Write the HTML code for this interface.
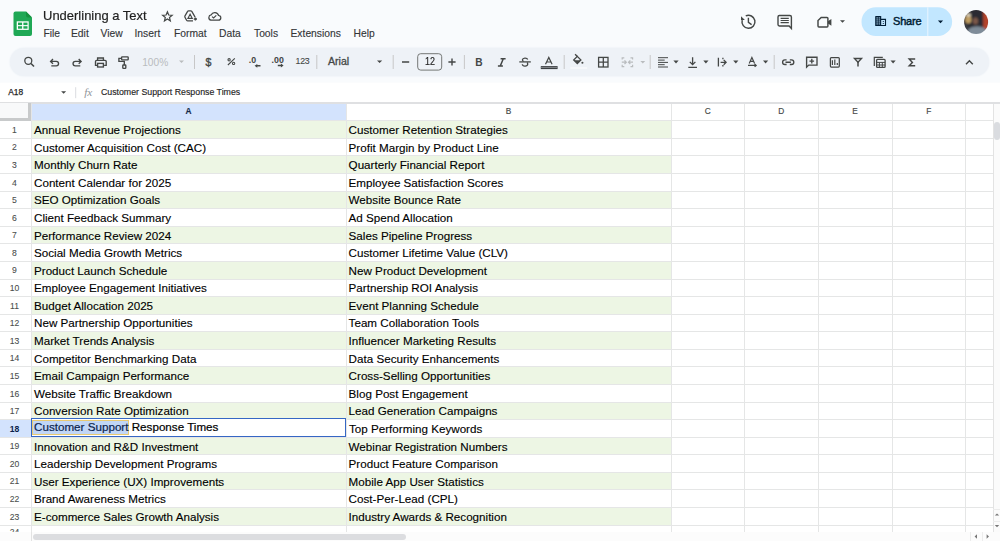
<!DOCTYPE html>
<html><head><meta charset="utf-8">
<style>
*{box-sizing:border-box}
html,body{margin:0;padding:0}
body{width:1000px;height:541px;overflow:hidden;position:relative;background:#f9fbfd;font-family:"Liberation Sans",sans-serif;color:#1f1f1f}
.a{position:absolute}
.t{position:absolute;white-space:nowrap;line-height:1}
.menu{position:absolute;top:28.6px;font-size:10.3px;line-height:1;color:#333537;white-space:nowrap;-webkit-text-stroke:0.12px #333537}
.rn{position:absolute;left:0;width:29px;text-align:center;font-size:8.6px;color:#4a4d4c;-webkit-text-stroke:0.08px #444746;padding-top:1px}
.rn.sel{width:31px;padding-right:2px;background:#d3e3fd;color:#0b1f4c;font-weight:bold;-webkit-text-stroke:0}
.ct{position:absolute;font-size:11.65px;color:#000;white-space:nowrap;line-height:17.58px;height:17.58px;padding-top:0.3px;-webkit-text-stroke:0.12px #000}
.ch{position:absolute;top:103px;height:17.5px;line-height:17.5px;text-align:center;font-size:8.3px;color:#444746;-webkit-text-stroke:0.15px #444746}
svg{position:absolute;overflow:visible}
.ic{fill:none;stroke:#444746;stroke-width:1.35;stroke-linecap:butt;stroke-linejoin:miter}
.dd{fill:#444746;stroke:none}
.sep{stroke:#c7c7c7;stroke-width:1}
</style></head><body>
<!-- top bar -->
<div class="a" style="left:0;top:83px;width:1000px;height:20px;background:#fff;box-shadow:0 0 2px 0.5px #fff"></div>
<!-- toolbar pill -->
<div class="a" style="left:10px;top:48px;width:979px;height:28px;border-radius:14px;background:#eef2f7;box-shadow:0 0 1.5px 0.5px #eef2f7"></div>

<svg style="left:0;top:0" width="1000" height="103" viewBox="0 0 1000 103">
<!-- logo -->
<g transform="translate(13.5 11.5)">
<path d="M2 0H12.5L18.5 6V22.5A2 2 0 0 1 16.5 24.5H2A2 2 0 0 1 0 22.5V2A2 2 0 0 1 2 0Z" fill="#1fa855"/>
<path d="M12.5 0L18.5 6H14.5A2 2 0 0 1 12.5 4Z" fill="#15923f"/>
<rect x="3.2" y="9.8" width="12" height="8.6" fill="#fff"/>
<rect x="4.5" y="11.1" width="4.1" height="2.5" fill="#1fa855"/>
<rect x="9.9" y="11.1" width="4.1" height="2.5" fill="#1fa855"/>
<rect x="4.5" y="14.7" width="4.1" height="2.5" fill="#1fa855"/>
<rect x="9.9" y="14.7" width="4.1" height="2.5" fill="#1fa855"/>
</g>
<!-- star -->
<path class="ic" style="stroke-width:1.2" d="M167.40 11.80L168.69 15.02L172.16 15.25L169.49 17.48L170.34 20.85L167.40 19.00L164.46 20.85L165.31 17.48L162.64 15.25L166.11 15.02Z"/>
<!-- drive add -->
<path class="ic" style="stroke-width:1.25" d="M195.1 17.1L191.8 11.4Q191.4 10.8 190.7 10.8H188.6Q187.9 10.8 187.6 11.4L185 15.9Q184.6 16.7 185 17.4L186.6 20.2Q187 20.9 187.8 20.9H193"/>
<path class="ic" style="stroke-width:1.1" d="M187.9 18.4H192.3L190.1 14.2Z"/>
<path d="M195.4 17.4V20.6M193.8 19H197" class="ic" style="stroke-width:1.4"/>
<!-- cloud -->
<path class="ic" style="stroke-width:1.25" d="M210.9 20.1H218.4A2.3 2.3 0 0 0 218.6 15.5A4 4 0 0 0 211.1 14.9A2.65 2.65 0 0 0 210.9 20.1Z"/>
<path class="ic" style="stroke-width:1.15" d="M212 16.6L213.6 18L216.3 15.3"/>

<!-- header right -->
<!-- history -->
<path class="ic" style="stroke-width:1.45" d="M745.75 15.9A6.5 6.5 0 1 1 742.2 20.1"/>
<path class="dd" d="M741 16.3V20.1H744.9Z"/>
<path class="ic" style="stroke-width:1.4" d="M748.4 17.7V22.3L751.6 24.6"/>
<!-- comments -->
<path class="ic" style="stroke-width:1.4" stroke-linejoin="round" d="M779.4 15.5H789.9Q791.4 15.5 791.4 17V28.4L789.1 26H779.4Q778 26 778 24.6V17Q778 15.5 779.4 15.5Z"/>
<path class="ic" style="stroke-width:1.15" d="M780.6 18.4H788.8M780.6 20.5H788.8M780.6 22.6H788.8"/>
<!-- meet -->
<path class="ic" style="stroke-width:1.45" d="M821.2 17.4H827A0.9 0.9 0 0 1 827.9 18.3V26.1A0.9 0.9 0 0 1 827 27H818.9A0.9 0.9 0 0 1 818 26.1V20.6Z"/>
<path class="dd" d="M827.9 21.3L831.4 19.1V25.7L827.9 23.5Z"/>
<path class="dd" d="M840 20.2H845L842.5 22.7Z"/>
<!-- share pill -->
<rect x="861.5" y="7.3" width="90.6" height="28.7" rx="14.35" fill="#c2e7ff"/>
<rect x="927.3" y="7.3" width="1" height="28.7" fill="#f9fbfd" opacity="0.7"/>
<rect x="875.2" y="16" width="6" height="10" rx="0.6" fill="#001d35"/>
<g fill="#c2e7ff"><rect x="876.4" y="17.5" width="1.5" height="0.9"/><rect x="878.6" y="17.5" width="1.5" height="0.9"/>
<rect x="876.4" y="19.5" width="1.5" height="0.9"/><rect x="878.6" y="19.5" width="1.5" height="0.9"/>
<rect x="876.4" y="21.5" width="1.5" height="0.9"/><rect x="878.6" y="21.5" width="1.5" height="0.9"/>
<rect x="876.4" y="23.5" width="1.5" height="0.9"/><rect x="878.6" y="23.5" width="1.5" height="0.9"/></g>
<path d="M881 19.4H885.5V25.5H881" fill="none" stroke="#001d35" stroke-width="1.1"/>
<circle cx="883.3" cy="21.5" r="0.6" fill="#001d35"/><circle cx="883.3" cy="23.5" r="0.6" fill="#001d35"/>
<path d="M937.9 20.6H943.1L940.5 23.2Z" fill="#001d35"/>
<!-- avatar -->
<defs>
<radialGradient id="av1" cx="0.3" cy="0.35" r="0.35"><stop offset="0" stop-color="#d9b878"/><stop offset="1" stop-color="#d9b878" stop-opacity="0"/></radialGradient>
<linearGradient id="av2" x1="0" y1="0" x2="1" y2="0"><stop offset="0.7" stop-color="#2a2a30" stop-opacity="0"/><stop offset="0.85" stop-color="#b8442a"/><stop offset="1" stop-color="#9a3a26"/></linearGradient>
<clipPath id="avc"><circle cx="976.1" cy="22.1" r="12"/></clipPath>
</defs>
<filter id="avb" x="-20%" y="-20%" width="140%" height="140%"><feGaussianBlur stdDeviation="1.1"/></filter>
<g clip-path="url(#avc)"><g filter="url(#avb)">
<rect x="962" y="8" width="29" height="29" fill="#2a2930"/>
<ellipse cx="968.3" cy="19.5" rx="3.2" ry="4" fill="#bf9d62"/>
<ellipse cx="968.5" cy="15" rx="2.6" ry="1.8" fill="#ddd3bd"/>
<rect x="983.2" y="11" width="6" height="18" fill="#b4432c"/>
<ellipse cx="975.5" cy="21" rx="2.6" ry="3.6" fill="#7b5849"/>
<ellipse cx="977" cy="31.5" rx="9.5" ry="5.2" fill="#7f8c99"/>
<ellipse cx="965.5" cy="27.5" rx="2.5" ry="3.5" fill="#3a3d45"/>
</g></g>

<!-- toolbar -->
<circle class="ic" cx="28.3" cy="60.8" r="3.5" style="stroke-width:1.3"/>
<path class="ic" style="stroke-width:1.5" d="M31 63.5L34 66.6"/>
<path class="ic" d="M50.6 61.3H56.3A2.25 2.25 0 0 1 56.3 65.8H51.3M53 59.1L50.6 61.4L53 63.7"/>
<path class="ic" d="M81.1 61.3H75.3A2.25 2.25 0 0 0 75.3 65.8H80.3M78.7 59.1L81.1 61.4L78.7 63.7"/>
<!-- print -->
<path class="ic" d="M97.6 60.2V58H103.4V60.2"/>
<path class="ic" d="M97.4 65.3H95.5V61.6A1.2 1.2 0 0 1 96.7 60.4H105A1.2 1.2 0 0 1 106.2 61.6V65.3H104.1"/>
<rect class="ic" x="97.6" y="63.4" width="5.8" height="3.6"/>
<!-- paint format -->
<rect class="ic" x="121.6" y="56.8" width="6.6" height="3" rx="0.6"/>
<path class="ic" d="M121.6 58.3H118.9V61.3H124.3V64.9"/>
<rect class="ic" x="122.8" y="65" width="3" height="3.4" rx="0.6"/>
<!-- 100% dropdown -->
<path d="M179 60.4H184L181.5 62.9Z" fill="#b9bcbe"/>
<!-- separators -->
<path class="sep" d="M194.5 55V69M316.8 55V69M393.2 55V69M464.4 55V69M564.2 55V69M650.2 55V69M774.2 55V69"/>
<!-- .0 arrow -->
<path class="dd" d="M254.6 65.8L257.3 63.9V65.1H260.5V66.5H257.3V67.7Z"/>
<path class="dd" d="M283.6 65.5L280.9 63.6V64.8H277.8V66.2H280.9V67.4Z"/>
<!-- font dropdown -->
<path class="dd" d="M377 60.4H382.2L379.6 63Z"/>
<!-- minus / plus / box -->
<path class="ic" style="stroke-width:1.4" d="M402 62H409.2M448.4 62H455.6M452 58.4V65.6"/>
<rect x="417.7" y="53.7" width="24" height="16.4" rx="3" fill="none" stroke="#747775" stroke-width="1"/>
<!-- strikethrough -->
<path class="ic" style="stroke-width:1.3" d="M519.3 61.9H530.8"/>
<path class="ic" style="stroke-width:1.3" d="M527.7 59.5A2.7 1.9 0 0 0 522.4 59.8Q522.5 60.9 523.6 61.5M527 62.4Q527.8 63 527.7 64A2.7 1.9 0 0 1 522.3 64.3"/>
<!-- text color bar -->
<rect x="540.8" y="66.1" width="16.8" height="3" fill="#3c4043"/>
<rect x="540.8" y="67.2" width="16.8" height="0.8" fill="#8c9094"/>
<path class="ic" style="stroke-width:1.2" d="M545.5 64.2L548.8 57.4L552.1 64.2M546.6 62H551"/>
<!-- fill bucket -->
<path class="ic" style="stroke-width:1.3" d="M575.1 54.3L577.6 56.8"/>
<path class="ic" style="stroke-width:1.3" d="M577.3 56.4L580.9 60L577.3 63.6L573.7 60Z"/>
<path class="dd" d="M574 60.2H580.6L577.3 63.5Z"/>
<circle cx="582.4" cy="62.8" r="1.05" fill="#444746"/>
<rect x="570.4" y="67.2" width="16.8" height="1.6" fill="#fff" opacity="0.6"/>
<!-- borders -->
<rect class="ic" x="598.6" y="57.4" width="9.4" height="9.6" style="stroke-width:1.3"/>
<path class="ic" style="stroke-width:1.3" d="M603.3 57.4V67M598.6 62.2H608"/>
<!-- merge disabled -->
<path fill="none" stroke="#b9bcbe" stroke-width="1.2" d="M624.3 57.8H622.2V59.6M622.2 64.8V66.6H624.3M630.5 57.8H632.6V59.6M632.6 64.8V66.6H630.5M621.8 62.2H626.2M633 62.2H628.6M624.5 60.4L626.3 62.2L624.5 64M630.3 60.4L628.5 62.2L630.3 64"/>
<path d="M640.4 61H645.2L642.8 63.4Z" fill="#b9bcbe"/>
<!-- align left -->
<path class="ic" style="stroke-width:1.0" d="M658 57.7H668M658 60.1H664.7M658 62.4H668M658 64.7H664.7M658 67H668"/>
<path class="dd" d="M673.4 60.6H678.6L676.0 63.4Z"/>
<!-- valign bottom -->
<path class="ic" style="stroke-width:1.3" d="M692.6 57.2V64.5M689.8 61.9L692.6 64.7L695.4 61.9M688.3 67.3H697"/>
<path class="dd" d="M703.3 60.6H708.5L705.9 63.4Z"/>
<!-- wrap -->
<path class="ic" style="stroke-width:1.3" d="M718.4 57.7V66.4M720.6 62.3H726M723.7 59.9L726.1 62.3L723.7 64.7M722.9 57.8V59.2M722.9 65V66.4"/>
<path class="dd" d="M733.2 60.6H738.4L735.8 63.4Z"/>
<!-- rotate -->
<path class="ic" style="stroke-width:1.15" d="M749.2 63.5L751.9 57.4L754.6 63.5M750.2 61.4H753.6"/>
<path class="ic" style="stroke-width:1.2" d="M748 65.4H756M754.6 64L756.2 65.4L754.6 66.8"/>
<path class="dd" d="M763.0 60.6H768.2L765.6 63.4Z"/>
<!-- link -->
<path class="ic" style="stroke-width:1.35" d="M786.6 59.9H784.9A2.3 2.3 0 0 0 784.9 64.5H786.6M789.8 59.9H791.5A2.3 2.3 0 0 1 791.5 64.5H789.8M785.5 62.2H790.9"/>
<!-- comment add -->
<path class="ic" style="stroke-width:1.35" d="M806.6 67.2V57.2H817V65.1H808.7Z"/>
<path class="ic" style="stroke-width:1.35" d="M811.8 58.8V63.4M809.5 61.1H814.1"/>
<!-- chart -->
<rect class="ic" x="830.4" y="57.6" width="8.9" height="9.4" rx="0.9" style="stroke-width:1.25"/>
<path class="ic" style="stroke-width:1.2" d="M832.4 60.2V64.9M834.8 59.5V64.9M837.3 63.1V64.9"/>
<!-- filter -->
<path class="ic" style="stroke-width:1.3" stroke-linejoin="round" d="M854.4 58.5H861.6L858 62.3Z"/><path class="ic" style="stroke-width:1.5" d="M858 62V66.4"/>
<!-- filter views (table) -->
<path class="ic" style="stroke-width:1.2" d="M874.3 66V57.3H882.8"/>
<rect class="ic" x="876.6" y="59.4" width="8.5" height="8" rx="0.9" style="stroke-width:1.3"/>
<path class="ic" style="stroke-width:1" d="M876.6 62.4H885.1M876.6 65H885.1M879.4 62.4V67.4M882.3 62.4V67.4"/>
<path class="dd" d="M890.5 60.6H895.7L893.1 63.4Z"/>
<!-- sigma -->
<path fill="none" stroke="#444746" stroke-width="1.45" d="M915.2 59H909.2L912.4 62.4L909.2 65.8H915.2"/>
<!-- chevron -->
<path class="ic" style="stroke-width:1.4" d="M966 64.2L969.4 60.8L972.8 64.2"/>

<!-- formula bar -->
<path class="dd" d="M61.1 91.3H66.1L63.6 93.8Z"/>
<path class="sep" d="M75.7 87.2V98.2" style="stroke:#dadce0"/>
</svg>

<div class="t" style="left:42.5px;top:8.7px;font-size:13.6px;color:#1f1f1f;-webkit-text-stroke:0.2px #1f1f1f;transform:scaleX(0.955);transform-origin:0 0">Underlining a Text</div>
<div class="menu" style="left:43.5px">File</div>
<div class="menu" style="left:71px">Edit</div>
<div class="menu" style="left:100.5px">View</div>
<div class="menu" style="left:134.5px">Insert</div>
<div class="menu" style="left:174px">Format</div>
<div class="menu" style="left:219px">Data</div>
<div class="menu" style="left:254px">Tools</div>
<div class="menu" style="left:290.5px">Extensions</div>
<div class="menu" style="left:353.5px">Help</div>

<div class="t" style="left:893px;top:16.4px;font-size:11px;color:#001d35;-webkit-text-stroke:0.45px #001d35;letter-spacing:-0.2px">Share</div>

<!-- toolbar text -->
<div class="t" style="left:142.2px;top:58.3px;font-size:10.2px;color:#b9bcbe">100%</div>
<div class="t" style="left:205.5px;top:57px;font-size:10.6px;color:#444746;-webkit-text-stroke:0.35px #444746">$</div>
<svg style="left:0;top:0" width="1" height="1"><circle cx="229.1" cy="59.8" r="1.15" fill="none" stroke="#444746" stroke-width="1.05"/><circle cx="233.6" cy="63.4" r="1.15" fill="none" stroke="#444746" stroke-width="1.05"/><path d="M234.8 58.3L227.9 65" stroke="#444746" stroke-width="1.05"/></svg>
<div class="t" style="left:248.8px;top:56.2px;font-size:8.8px;font-weight:bold;color:#444746">.0</div>
<div class="t" style="left:271.6px;top:56.2px;font-size:8.8px;font-weight:bold;color:#444746">.00</div>
<div class="t" style="left:295.5px;top:57.2px;font-size:8.8px;color:#444746;-webkit-text-stroke:0.1px #444746;letter-spacing:-0.25px">123</div>
<div class="t" style="left:328px;top:56.3px;font-size:10.6px;color:#444746;-webkit-text-stroke:0.3px #444746">Arial</div>
<div class="t" style="left:424.6px;top:56.9px;font-size:10.2px;color:#1f1f1f;-webkit-text-stroke:0.15px #1f1f1f;transform:scaleX(0.88);transform-origin:0 0">12</div>
<div class="t" style="left:475.3px;top:58px;font-size:10.2px;font-weight:bold;color:#444746">B</div>
<svg style="left:0;top:0" width="1" height="1"><path d="M500.6 58.7H505.6M497.9 65.9H502.9M503.3 58.7L500.3 65.9" fill="none" stroke="#444746" stroke-width="1.45"/></svg>
<div class="t" style="left:520.6px;top:57.6px;font-size:10.3px;color:#444746;-webkit-text-stroke:0.2px #444746;display:none">S</div>

<!-- formula bar text -->
<div class="t" style="left:8.2px;top:88.1px;font-size:8.4px;color:#1f1f1f;-webkit-text-stroke:0.25px #1f1f1f">A18</div>
<div class="t" style="left:84.3px;top:87.4px;font-size:11.3px;font-style:italic;font-family:'Liberation Serif',serif;color:#8f9499;letter-spacing:-0.1px">fx</div>
<div class="t" style="left:100.9px;top:87.7px;font-size:8.8px;color:#1f1f1f;-webkit-text-stroke:0.15px #1f1f1f">Customer Support Response Times</div>

<!-- grid area -->
<div class="a" style="left:0;top:103px;width:1000px;height:438px;background:#fff"></div>
<div class="a" style="left:31px;top:103px;width:315px;height:18px;background:#d3e3fd"></div>
<div style="position:absolute;left:31px;top:120.80px;width:640px;height:17.58px;background:#edf6e4"></div>
<div style="position:absolute;left:31px;top:155.96px;width:640px;height:17.58px;background:#edf6e4"></div>
<div style="position:absolute;left:31px;top:191.12px;width:640px;height:17.58px;background:#edf6e4"></div>
<div style="position:absolute;left:31px;top:226.28px;width:640px;height:17.58px;background:#edf6e4"></div>
<div style="position:absolute;left:31px;top:261.44px;width:640px;height:17.58px;background:#edf6e4"></div>
<div style="position:absolute;left:31px;top:296.60px;width:640px;height:17.58px;background:#edf6e4"></div>
<div style="position:absolute;left:31px;top:331.76px;width:640px;height:17.58px;background:#edf6e4"></div>
<div style="position:absolute;left:31px;top:366.92px;width:640px;height:17.58px;background:#edf6e4"></div>
<div style="position:absolute;left:31px;top:402.08px;width:640px;height:17.58px;background:#edf6e4"></div>
<div style="position:absolute;left:31px;top:437.24px;width:640px;height:17.58px;background:#edf6e4"></div>
<div style="position:absolute;left:31px;top:472.40px;width:640px;height:17.58px;background:#edf6e4"></div>
<div style="position:absolute;left:31px;top:507.56px;width:640px;height:17.58px;background:#edf6e4"></div>
<div style="position:absolute;left:0;top:120.30px;width:993.3px;height:1px;background:#e5e6e6"></div>
<div style="position:absolute;left:0;top:137.88px;width:993.3px;height:1px;background:#e5e6e6"></div>
<div style="position:absolute;left:0;top:155.46px;width:993.3px;height:1px;background:#e5e6e6"></div>
<div style="position:absolute;left:0;top:173.04px;width:993.3px;height:1px;background:#e5e6e6"></div>
<div style="position:absolute;left:0;top:190.62px;width:993.3px;height:1px;background:#e5e6e6"></div>
<div style="position:absolute;left:0;top:208.20px;width:993.3px;height:1px;background:#e5e6e6"></div>
<div style="position:absolute;left:0;top:225.78px;width:993.3px;height:1px;background:#e5e6e6"></div>
<div style="position:absolute;left:0;top:243.36px;width:993.3px;height:1px;background:#e5e6e6"></div>
<div style="position:absolute;left:0;top:260.94px;width:993.3px;height:1px;background:#e5e6e6"></div>
<div style="position:absolute;left:0;top:278.52px;width:993.3px;height:1px;background:#e5e6e6"></div>
<div style="position:absolute;left:0;top:296.10px;width:993.3px;height:1px;background:#e5e6e6"></div>
<div style="position:absolute;left:0;top:313.68px;width:993.3px;height:1px;background:#e5e6e6"></div>
<div style="position:absolute;left:0;top:331.26px;width:993.3px;height:1px;background:#e5e6e6"></div>
<div style="position:absolute;left:0;top:348.84px;width:993.3px;height:1px;background:#e5e6e6"></div>
<div style="position:absolute;left:0;top:366.42px;width:993.3px;height:1px;background:#e5e6e6"></div>
<div style="position:absolute;left:0;top:384.00px;width:993.3px;height:1px;background:#e5e6e6"></div>
<div style="position:absolute;left:0;top:401.58px;width:993.3px;height:1px;background:#e5e6e6"></div>
<div style="position:absolute;left:0;top:419.16px;width:993.3px;height:1px;background:#e5e6e6"></div>
<div style="position:absolute;left:0;top:436.74px;width:993.3px;height:1px;background:#e5e6e6"></div>
<div style="position:absolute;left:0;top:454.32px;width:993.3px;height:1px;background:#e5e6e6"></div>
<div style="position:absolute;left:0;top:471.90px;width:993.3px;height:1px;background:#e5e6e6"></div>
<div style="position:absolute;left:0;top:489.48px;width:993.3px;height:1px;background:#e5e6e6"></div>
<div style="position:absolute;left:0;top:507.06px;width:993.3px;height:1px;background:#e5e6e6"></div>
<div style="position:absolute;left:0;top:524.64px;width:993.3px;height:1px;background:#e5e6e6"></div>
<div style="position:absolute;left:0;top:542.22px;width:993.3px;height:1px;background:#e5e6e6"></div>
<div style="position:absolute;left:30.50px;top:103px;width:1px;height:429px;background:#e5e6e6"></div>
<div style="position:absolute;left:345.50px;top:103px;width:1px;height:429px;background:#e5e6e6"></div>
<div style="position:absolute;left:670.50px;top:103px;width:1px;height:429px;background:#e5e6e6"></div>
<div style="position:absolute;left:744.00px;top:103px;width:1px;height:429px;background:#e5e6e6"></div>
<div style="position:absolute;left:817.50px;top:103px;width:1px;height:429px;background:#e5e6e6"></div>
<div style="position:absolute;left:891.50px;top:103px;width:1px;height:429px;background:#e5e6e6"></div>
<div style="position:absolute;left:965.00px;top:103px;width:1px;height:429px;background:#e5e6e6"></div>
<div style="position:absolute;left:992.80px;top:103px;width:1px;height:429px;background:#e5e6e6"></div>
<div class="rn" style="top:120.80px;height:17.58px;line-height:17.58px">1</div>
<div class="rn" style="top:138.38px;height:17.58px;line-height:17.58px">2</div>
<div class="rn" style="top:155.96px;height:17.58px;line-height:17.58px">3</div>
<div class="rn" style="top:173.54px;height:17.58px;line-height:17.58px">4</div>
<div class="rn" style="top:191.12px;height:17.58px;line-height:17.58px">5</div>
<div class="rn" style="top:208.70px;height:17.58px;line-height:17.58px">6</div>
<div class="rn" style="top:226.28px;height:17.58px;line-height:17.58px">7</div>
<div class="rn" style="top:243.86px;height:17.58px;line-height:17.58px">8</div>
<div class="rn" style="top:261.44px;height:17.58px;line-height:17.58px">9</div>
<div class="rn" style="top:279.02px;height:17.58px;line-height:17.58px">10</div>
<div class="rn" style="top:296.60px;height:17.58px;line-height:17.58px">11</div>
<div class="rn" style="top:314.18px;height:17.58px;line-height:17.58px">12</div>
<div class="rn" style="top:331.76px;height:17.58px;line-height:17.58px">13</div>
<div class="rn" style="top:349.34px;height:17.58px;line-height:17.58px">14</div>
<div class="rn" style="top:366.92px;height:17.58px;line-height:17.58px">15</div>
<div class="rn" style="top:384.50px;height:17.58px;line-height:17.58px">16</div>
<div class="rn" style="top:402.08px;height:17.58px;line-height:17.58px">17</div>
<div class="rn sel" style="top:419.66px;height:17.58px;line-height:17.58px">18</div>
<div class="rn" style="top:437.24px;height:17.58px;line-height:17.58px">19</div>
<div class="rn" style="top:454.82px;height:17.58px;line-height:17.58px">20</div>
<div class="rn" style="top:472.40px;height:17.58px;line-height:17.58px">21</div>
<div class="rn" style="top:489.98px;height:17.58px;line-height:17.58px">22</div>
<div class="rn" style="top:507.56px;height:17.58px;line-height:17.58px">23</div>
<div class="rn" style="top:522.94px;height:17.58px;line-height:17.58px">24</div>
<div class="ct" style="left:34px;top:120.80px">Annual Revenue Projections</div>
<div class="ct" style="left:348.6px;top:120.80px">Customer Retention Strategies</div>
<div class="ct" style="left:34px;top:138.38px">Customer Acquisition Cost (CAC)</div>
<div class="ct" style="left:348.6px;top:138.38px">Profit Margin by Product Line</div>
<div class="ct" style="left:34px;top:155.96px">Monthly Churn Rate</div>
<div class="ct" style="left:348.6px;top:155.96px">Quarterly Financial Report</div>
<div class="ct" style="left:34px;top:173.54px">Content Calendar for 2025</div>
<div class="ct" style="left:348.6px;top:173.54px">Employee Satisfaction Scores</div>
<div class="ct" style="left:34px;top:191.12px">SEO Optimization Goals</div>
<div class="ct" style="left:348.6px;top:191.12px">Website Bounce Rate</div>
<div class="ct" style="left:34px;top:208.70px">Client Feedback Summary</div>
<div class="ct" style="left:348.6px;top:208.70px">Ad Spend Allocation</div>
<div class="ct" style="left:34px;top:226.28px">Performance Review 2024</div>
<div class="ct" style="left:348.6px;top:226.28px">Sales Pipeline Progress</div>
<div class="ct" style="left:34px;top:243.86px">Social Media Growth Metrics</div>
<div class="ct" style="left:348.6px;top:243.86px">Customer Lifetime Value (CLV)</div>
<div class="ct" style="left:34px;top:261.44px">Product Launch Schedule</div>
<div class="ct" style="left:348.6px;top:261.44px">New Product Development</div>
<div class="ct" style="left:34px;top:279.02px">Employee Engagement Initiatives</div>
<div class="ct" style="left:348.6px;top:279.02px">Partnership ROI Analysis</div>
<div class="ct" style="left:34px;top:296.60px">Budget Allocation 2025</div>
<div class="ct" style="left:348.6px;top:296.60px">Event Planning Schedule</div>
<div class="ct" style="left:34px;top:314.18px">New Partnership Opportunities</div>
<div class="ct" style="left:348.6px;top:314.18px">Team Collaboration Tools</div>
<div class="ct" style="left:34px;top:331.76px">Market Trends Analysis</div>
<div class="ct" style="left:348.6px;top:331.76px">Influencer Marketing Results</div>
<div class="ct" style="left:34px;top:349.34px">Competitor Benchmarking Data</div>
<div class="ct" style="left:348.6px;top:349.34px">Data Security Enhancements</div>
<div class="ct" style="left:34px;top:366.92px">Email Campaign Performance</div>
<div class="ct" style="left:348.6px;top:366.92px">Cross-Selling Opportunities</div>
<div class="ct" style="left:34px;top:384.50px">Website Traffic Breakdown</div>
<div class="ct" style="left:348.6px;top:384.50px">Blog Post Engagement</div>
<div class="ct" style="left:34px;top:402.08px">Conversion Rate Optimization</div>
<div class="ct" style="left:348.6px;top:402.08px">Lead Generation Campaigns</div>
<div class="ct" style="left:34px;top:437.24px">Innovation and R&amp;D Investment</div>
<div class="ct" style="left:348.6px;top:437.24px">Webinar Registration Numbers</div>
<div class="ct" style="left:34px;top:454.82px">Leadership Development Programs</div>
<div class="ct" style="left:348.6px;top:454.82px">Product Feature Comparison</div>
<div class="ct" style="left:34px;top:472.40px">User Experience (UX) Improvements</div>
<div class="ct" style="left:348.6px;top:472.40px">Mobile App User Statistics</div>
<div class="ct" style="left:34px;top:489.98px">Brand Awareness Metrics</div>
<div class="ct" style="left:348.6px;top:489.98px">Cost-Per-Lead (CPL)</div>
<div class="ct" style="left:34px;top:507.56px">E-commerce Sales Growth Analysis</div>
<div class="ct" style="left:348.6px;top:507.56px">Industry Awards &amp; Recognition</div>
<div class="a" style="left:0;top:102.2px;width:1000px;height:1.6px;background:#dfe0e2"></div>
<div class="a" style="left:0;top:103px;width:28px;height:15px;background:#f8f9fa"></div>
<div class="a" style="left:0;top:118px;width:31px;height:3px;background:#c8cacb"></div>
<div class="a" style="left:28px;top:103px;width:3.2px;height:18px;background:#c8cacb"></div>
<div class="ch" style="left:31px;width:315px;color:#0b1f4c;font-weight:bold">A</div>
<div class="ch" style="left:346px;width:325px">B</div>
<div class="ch" style="left:671px;width:73.5px">C</div>
<div class="ch" style="left:744.5px;width:73.5px">D</div>
<div class="ch" style="left:818px;width:74px">E</div>
<div class="ch" style="left:892px;width:73.5px">F</div>
<!-- edit cell -->
<div class="a" style="left:30.8px;top:418.4px;width:315.2px;height:18.4px;border:1.8px solid #3567c4;background:#fff"></div>
<div class="a" style="left:32.3px;top:419.9px;width:96.9px;height:15.4px;border:1.3px solid #e8ca72;background:#c1d6f6"></div>
<div class="ct" style="left:34px;top:418px;color:#0b1f4c;-webkit-text-stroke:0.2px #0b1f4c">Customer Support<span style="color:#000;-webkit-text-stroke:0.2px #000"> Response Times</span></div>
<div class="ct" style="left:349px;top:419.7px">Top Performing Keywords</div>
<!-- scrollbars -->
<div class="a" style="left:0;top:531.5px;width:993px;height:1px;background:#e3e3e3"></div>
<div class="a" style="left:0;top:532px;width:1000px;height:9px;background:#fcfcfc"></div>
<div class="a" style="left:30.5px;top:532px;width:1px;height:9px;background:#e3e3e3"></div>
<div class="a" style="left:969.5px;top:532px;width:1px;height:9px;background:#ececec"></div>
<div class="a" style="left:981.5px;top:532px;width:1px;height:9px;background:#ececec"></div>
<div class="a" style="left:33.3px;top:533.6px;width:372.4px;height:6px;border-radius:3px;background:#dcdde0"></div>
<div class="a" style="left:993px;top:103.8px;width:7px;height:428.2px;background:#fbfbfb;border-left:1px solid #e3e3e3"></div>
<div class="a" style="left:993px;top:509px;width:7px;height:1px;background:#ececec"></div>
<div class="a" style="left:993px;top:521px;width:7px;height:1px;background:#ececec"></div>
<div class="a" style="left:994.4px;top:121.8px;width:6px;height:18.5px;border-radius:3px;background:#dadce0"></div>
<svg style="left:0;top:0" width="1" height="1"><path d="M977 534.3V538.7L974.6 536.5Z" fill="#777"/><path d="M986.6 534.3V538.7L989 536.5Z" fill="#777"/>
<path d="M994.8 515.6H999.2L997 513.4Z" fill="#777"/><path d="M994.8 525H999.2L997 527.2Z" fill="#777"/></svg>
</body></html>
